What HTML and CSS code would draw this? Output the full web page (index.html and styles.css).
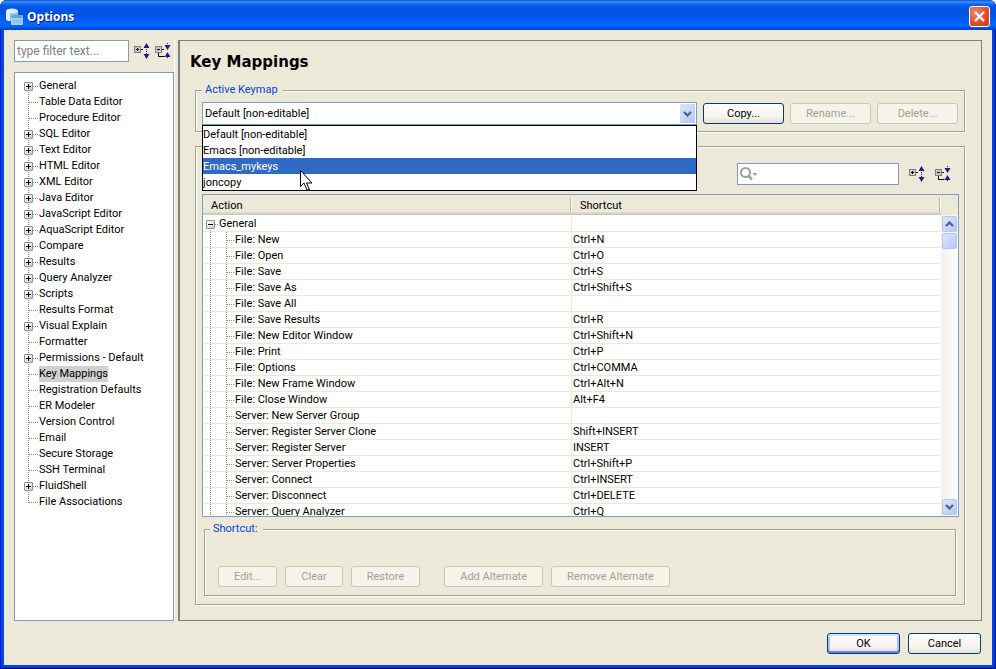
FILE: index.html
```html
<!DOCTYPE html>
<html lang="en">

<head>
  <meta charset="UTF-8">
  <meta name="viewport" content="width=device-width, initial-scale=1.0">
  <title>Options</title>
  <link rel="stylesheet" href="styles.css">
</head>

<body>

  <!-- Shared icons -->
  <svg class="symbols" aria-hidden="true">
    <symbol id="expand-all" viewBox="0 0 16 16">
      <rect x="0.5" y="3.5" width="6" height="6" fill="#c8c8c8" stroke="#808080"/>
      <path d="M2 6.5h3M3.5 5v3M7 6.5h2" stroke="#000" fill="none"/>
      <path d="M12.5 0l3 5h-6zM12.5 16l3-5h-6z" fill="#1c1c8c"/>
      <path d="M12.5 6v5" stroke="#1c1c8c" stroke-dasharray="1 1" fill="none"/>
    </symbol>
    <symbol id="collapse-all" viewBox="0 0 16 16">
      <rect x="0.5" y="3.5" width="6" height="6" fill="#c8c8c8" stroke="#808080"/>
      <path d="M2 6.5h3M7 6.5h2M3.5 10v3.5h6" stroke="#000" fill="none"/>
      <path d="M12.5 7l3-5h-6zM12.5 9l3 5h-6z" fill="#1c1c8c"/>
      <path d="M12.5 0v2M12.5 14v2" stroke="#1c1c8c" stroke-dasharray="1 1" fill="none"/>
    </symbol>
    <symbol id="chevron-down" viewBox="0 0 9 6">
      <path d="M1 1l3.5 3.5L8 1" fill="none" stroke="#4d6185" stroke-width="2.2"/>
    </symbol>
    <symbol id="chevron-up" viewBox="0 0 9 6">
      <path d="M1 5l3.5-3.5L8 5" fill="none" stroke="#4d6185" stroke-width="2.2"/>
    </symbol>
  </svg>

  <div class="window">
    <header class="titlebar">
      <svg class="app-icon" viewBox="0 0 17 17" aria-hidden="true">
        <path d="M0 3v8c0 3 12 3 12 0V3z" fill="#8cc4ea"/>
        <path d="M0 3v8c0 1 2 2 4 2V4z" fill="#e4f1f8"/>
        <ellipse cx="6" cy="3" rx="6" ry="2.4" fill="#d9f0f4"/>
        <rect x="5" y="7" width="12" height="10" rx="1" fill="#a9d2f0"/>
        <rect x="5" y="7" width="12" height="3" rx="1" fill="#5fa8dc"/>
        <path d="M6 12.5h10M6 14.5h10M8.5 10v6M11.5 10v6M14.5 10v6" stroke="#8abfe4" fill="none"/>
      </svg>
      <span class="window-title">Options</span>
      <button type="button" class="close-btn" aria-label="Close">
        <svg viewBox="0 0 11 11"><path d="M1 1l9 9M10 1l-9 9" stroke="#fff" stroke-width="2.2"/></svg>
      </button>
    </header>

    <main class="content">
      <aside class="sidebar">
        <div class="filter-row">
          <input type="text" class="filter" placeholder="type filter text..." aria-label="Filter options">
          <button type="button" class="icon-btn" aria-label="Expand all"><svg><use href="#expand-all"/></svg></button>
          <button type="button" class="icon-btn" aria-label="Collapse all"><svg><use href="#collapse-all"/></svg></button>
        </div>
        <ul class="tree">
          <li><button type="button" class="expander" aria-label="Expand"></button><span>General</span></li>
          <li><span>Table Data Editor</span></li>
          <li><span>Procedure Editor</span></li>
          <li><button type="button" class="expander" aria-label="Expand"></button><span>SQL Editor</span></li>
          <li><button type="button" class="expander" aria-label="Expand"></button><span>Text Editor</span></li>
          <li><button type="button" class="expander" aria-label="Expand"></button><span>HTML Editor</span></li>
          <li><button type="button" class="expander" aria-label="Expand"></button><span>XML Editor</span></li>
          <li><button type="button" class="expander" aria-label="Expand"></button><span>Java Editor</span></li>
          <li><button type="button" class="expander" aria-label="Expand"></button><span>JavaScript Editor</span></li>
          <li><button type="button" class="expander" aria-label="Expand"></button><span>AquaScript Editor</span></li>
          <li><button type="button" class="expander" aria-label="Expand"></button><span>Compare</span></li>
          <li><button type="button" class="expander" aria-label="Expand"></button><span>Results</span></li>
          <li><button type="button" class="expander" aria-label="Expand"></button><span>Query Analyzer</span></li>
          <li><button type="button" class="expander" aria-label="Expand"></button><span>Scripts</span></li>
          <li><span>Results Format</span></li>
          <li><button type="button" class="expander" aria-label="Expand"></button><span>Visual Explain</span></li>
          <li><span>Formatter</span></li>
          <li><button type="button" class="expander" aria-label="Expand"></button><span>Permissions - Default</span></li>
          <li><span class="selected">Key Mappings</span></li>
          <li><span>Registration Defaults</span></li>
          <li><span>ER Modeler</span></li>
          <li><span>Version Control</span></li>
          <li><span>Email</span></li>
          <li><span>Secure Storage</span></li>
          <li><span>SSH Terminal</span></li>
          <li><button type="button" class="expander" aria-label="Expand"></button><span>FluidShell</span></li>
          <li><span>File Associations</span></li>
        </ul>
      </aside>

      <section class="panel">
        <h1>Key Mappings</h1>

        <fieldset class="keymap">
          <legend><label for="keymap">Active Keymap</label></legend>
          <div class="keymap-row">
            <div class="combo">
              <select id="keymap">
                <option>Default [non-editable]</option>
                <option>Emacs [non-editable]</option>
                <option>Emacs_mykeys</option>
                <option>joncopy</option>
              </select>
              <span class="combo-arrow"><svg><use href="#chevron-down"/></svg></span>
              <ul class="combo-list" role="listbox" aria-label="Active Keymap">
                <li role="option">Default [non-editable]</li>
                <li role="option">Emacs [non-editable]</li>
                <li role="option" class="active" aria-selected="true">Emacs_mykeys</li>
                <li role="option">joncopy</li>
              </ul>
              <svg class="pointer" viewBox="0 0 13 21" aria-hidden="true">
                <path d="M0.5 0.5v16l3.500-3.500 3 7h2.500l-3-7h5.500z" fill="#fff" stroke="#000"/>
              </svg>
            </div>
            <button type="button" class="btn wide">Copy...</button>
            <button type="button" class="btn wide" disabled>Rename...</button>
            <button type="button" class="btn wide" disabled>Delete...</button>
          </div>
        </fieldset>

        <section class="actions">
          <div class="search-row">
            <div class="search">
              <svg viewBox="0 0 18 14" aria-hidden="true">
                <circle cx="5.5" cy="5.5" r="4.5" fill="none" stroke="#a0a0a0" stroke-width="2"/>
                <path d="M8.5 9l3.5 3.5" stroke="#a0a0a0" stroke-width="2.5"/>
                <path d="M12.5 6h5l-2.5 3z" fill="#a0a0a0"/>
              </svg>
              <input type="text" aria-label="Search actions">
            </div>
            <button type="button" class="icon-btn" aria-label="Expand all"><svg><use href="#expand-all"/></svg></button>
            <button type="button" class="icon-btn" aria-label="Collapse all"><svg><use href="#collapse-all"/></svg></button>
          </div>

          <div class="grid">
            <div class="grid-view">
              <table>
                <thead>
                  <tr><th>Action</th><th>Shortcut</th></tr>
                </thead>
                <tbody>
                  <tr class="group"><td><button type="button" class="expander open" aria-label="Collapse"></button>General</td><td></td></tr>
                  <tr><td>File: New</td><td>Ctrl+N</td></tr>
                  <tr><td>File: Open</td><td>Ctrl+O</td></tr>
                  <tr><td>File: Save</td><td>Ctrl+S</td></tr>
                  <tr><td>File: Save As</td><td>Ctrl+Shift+S</td></tr>
                  <tr><td>File: Save All</td><td></td></tr>
                  <tr><td>File: Save Results</td><td>Ctrl+R</td></tr>
                  <tr><td>File: New Editor Window</td><td>Ctrl+Shift+N</td></tr>
                  <tr><td>File: Print</td><td>Ctrl+P</td></tr>
                  <tr><td>File: Options</td><td>Ctrl+COMMA</td></tr>
                  <tr><td>File: New Frame Window</td><td>Ctrl+Alt+N</td></tr>
                  <tr><td>File: Close Window</td><td>Alt+F4</td></tr>
                  <tr><td>Server: New Server Group</td><td></td></tr>
                  <tr><td>Server: Register Server Clone</td><td>Shift+INSERT</td></tr>
                  <tr><td>Server: Register Server</td><td>INSERT</td></tr>
                  <tr><td>Server: Server Properties</td><td>Ctrl+Shift+P</td></tr>
                  <tr><td>Server: Connect</td><td>Ctrl+INSERT</td></tr>
                  <tr><td>Server: Disconnect</td><td>Ctrl+DELETE</td></tr>
                  <tr><td>Server: Query Analyzer</td><td>Ctrl+Q</td></tr>
                </tbody>
              </table>
            </div>
            <div class="scrollbar">
              <button type="button" class="scroll-btn" aria-label="Scroll up"><svg><use href="#chevron-up"/></svg></button>
              <div class="thumb"></div>
              <button type="button" class="scroll-btn last" aria-label="Scroll down"><svg><use href="#chevron-down"/></svg></button>
            </div>
          </div>

          <fieldset class="shortcut">
            <legend>Shortcut:</legend>
            <div class="shortcut-row">
              <button type="button" class="btn" disabled>Edit...</button>
              <button type="button" class="btn" disabled>Clear</button>
              <button type="button" class="btn" disabled>Restore</button>
              <button type="button" class="btn split" disabled>Add Alternate</button>
              <button type="button" class="btn" disabled>Remove Alternate</button>
            </div>
          </fieldset>
        </section>
      </section>
    </main>

    <footer class="footer">
      <button type="button" class="btn default">OK</button>
      <button type="button" class="btn cancel">Cancel</button>
    </footer>
  </div>

</body>

</html>
```

FILE: styles.css
```css
* {
  box-sizing: border-box;
}

body {
  margin: 0;
  background: #fff;
  color: #000;
  font-family: Roboto, "Liberation Sans", sans-serif;
  font-size: 11px;
  line-height: 16px;
}

button, input, select {
  font: inherit;
  color: inherit;
  margin: 0;
}

ul {
  list-style: none;
  margin: 0;
  padding: 0;
}

.symbols {
  display: none;
}

/* Window frame */
.window {
  display: flex;
  flex-direction: column;
  height: 100vh;
  padding: 0 4px 4px;
  border-radius: 7px 7px 0 0;
  background: #0046e0;
  box-shadow: inset 1px 0 #0019cf, inset -1px -1px #00138c, inset -2px -2px #0030c8;
  overflow: hidden;
}

.titlebar {
  display: flex;
  align-items: center;
  flex: none;
  height: 30px;
  margin: 0 -4px;
  padding: 3px 6px 0;
  background: linear-gradient(#0850d0 0, #3c90ff 2px, #1268f0 4px, #0055e6 7px, #0054e3 14px, #0062fa 22px, #0066ff 26px, #0050e0 28px, #0040c8 30px);
}

.app-icon {
  width: 17px;
  height: 17px;
}

.window-title {
  flex: 1;
  margin-left: 4px;
  color: #fff;
  font-family: "Open Sans", "Noto Sans", sans-serif;
  font-size: 12px;
  font-weight: bold;
  text-shadow: 1px 1px #0a1883;
}

.close-btn {
  display: flex;
  align-items: center;
  justify-content: center;
  width: 21px;
  height: 21px;
  padding: 0;
  border: 1px solid #fff;
  border-radius: 3px;
  background: radial-gradient(circle at 30% 30%, #f08a6c, #e0502c 55%, #c83c14);
}

.close-btn svg {
  width: 11px;
  height: 11px;
}

.content {
  display: flex;
  flex: 1;
  min-height: 0;
  padding: 10px 10px 0;
  background: #ece9d8;
}

.footer {
  display: flex;
  justify-content: flex-end;
  gap: 8px;
  padding: 12px 11px 11px;
  background: #ece9d8;
}

/* Sidebar */
.sidebar {
  display: flex;
  flex-direction: column;
  flex: none;
  gap: 10px;
  width: 161px;
  margin-right: 3px;
  border-right: 1px solid #fff;
}

.filter-row {
  display: flex;
  align-items: center;
  gap: 5px;
  padding-right: 3px;
}

.filter {
  flex: 1;
  min-width: 0;
  height: 22px;
  padding: 0 2px;
  border: 1px solid #7f9db9;
  background: #fff;
  font-size: 12px;
}

.filter::placeholder {
  color: #808080;
}

.icon-btn {
  width: 16px;
  height: 16px;
  padding: 0;
  border: none;
  background: none;
}

.icon-btn svg {
  display: block;
  width: 16px;
  height: 16px;
}

.tree {
  flex: 1;
  min-height: 0;
  padding-top: 5px;
  border: 1px solid #7f9db9;
  background: #fff;
  overflow: hidden;
}

.tree li {
  display: flex;
  align-items: center;
  height: 16px;
  padding-left: 24px;
  background-image:
    repeating-linear-gradient(#909090 0 1px, transparent 1px 2px),
    repeating-linear-gradient(to right, #909090 0 1px, transparent 1px 2px);
  background-repeat: no-repeat;
  background-position: 13px 0, 14px 8px;
  background-size: 1px 100%, 10px 1px;
}

.tree li:first-child {
  background-position: 13px 8px, 14px 8px;
}

.tree li:last-child {
  background-size: 1px 9px, 10px 1px;
}

.tree span {
  white-space: nowrap;
}

.tree .selected {
  background: #d0d0d0;
}

.expander {
  flex: none;
  width: 9px;
  height: 9px;
  margin: 1px 6px 0 -15px;
  padding: 0;
  border: 1px solid #7b93b0;
  border-radius: 1px;
  background:
    linear-gradient(#000, #000) center / 5px 1px no-repeat,
    linear-gradient(#000, #000) center / 1px 5px no-repeat,
    linear-gradient(135deg, #fff, #d0ccc0);
}

.expander.open {
  background:
    linear-gradient(#000, #000) center / 5px 1px no-repeat,
    linear-gradient(135deg, #fff, #d0ccc0);
}

/* Key mappings panel */
.panel {
  display: flex;
  flex-direction: column;
  flex: 1;
  min-width: 0;
  padding: 11px 16px 15px 15px;
  border: 1px solid #808080;
  border-left-width: 2px;
}

h1 {
  margin: 0 0 11px -5px;
  font-family: "DejaVu Sans", sans-serif;
  font-size: 15px;
  line-height: 20px;
}

fieldset, .actions {
  min-width: 0;
  margin: 0;
  border: 1px solid #a0a093;
  box-shadow: 1px 1px #fff, inset 1px 1px #fff;
}

legend {
  padding: 0 5px 0 3px;
  background: #ece9d8;
  color: #0046d5;
  line-height: 14px;
}

.keymap {
  padding: 5px 6px 6px;
}

.keymap-row {
  display: flex;
  align-items: center;
  gap: 6px;
}

.combo {
  position: relative;
  flex: 1;
}

.combo select {
  display: block;
  width: 100%;
  height: 23px;
  padding: 0 20px 0 2px;
  border: 1px solid #7f9db9;
  border-radius: 0;
  background: #fff;
  appearance: none;
}

.combo-arrow {
  position: absolute;
  top: 2px;
  right: 2px;
  display: flex;
  align-items: center;
  justify-content: center;
  width: 15px;
  height: 19px;
  background: linear-gradient(135deg, #dce6fe, #b4c8f6);
  pointer-events: none;
}

.combo-arrow svg, .scroll-btn svg {
  width: 9px;
  height: 6px;
}

.combo-list {
  position: absolute;
  top: 100%;
  left: 0;
  right: 0;
  z-index: 1;
  border: 1px solid #000;
  background: #fff;
}

.combo-list li {
  height: 16px;
  line-height: 18px;
}

.combo-list li.active {
  background: #316ac5;
  color: #fff;
}

.pointer {
  position: absolute;
  top: 68px;
  left: 98px;
  z-index: 2;
  width: 13px;
  height: 21px;
}

.btn {
  height: 21px;
  padding: 0 15px;
  border: 1px solid #003c74;
  border-radius: 3px;
  background: linear-gradient(#fff, #f4f3ee 70%, #e2dfd4);
  line-height: 19px;
  white-space: nowrap;
}

.btn:disabled {
  border-color: #c9c7ba;
  background: #f5f4ea;
  color: #a1a192;
}

.btn.wide {
  width: 81px;
}

.btn.default, .btn.cancel {
  width: 73px;
}

.btn.default {
  box-shadow: inset 0 2px #cee3ff, inset 0 -2px #6982ee, inset 2px 0 #a9c4f4, inset -2px 0 #a9c4f4;
}

/* Action list */
.actions {
  display: flex;
  flex-direction: column;
  flex: 1;
  min-height: 0;
  margin-top: 14px;
  padding: 16px 5px 8px 6px;
}

.search-row {
  display: flex;
  align-items: center;
  justify-content: flex-end;
  gap: 10px;
  margin-bottom: 9px;
  padding-right: 8px;
}

.search {
  display: flex;
  align-items: center;
  width: 162px;
  height: 22px;
  padding-left: 2px;
  border: 1px solid #7f9db9;
  background: #fff;
}

.search svg {
  flex: none;
  width: 18px;
  height: 14px;
}

.search input {
  flex: 1;
  min-width: 0;
  padding: 0 2px;
  border: none;
  background: none;
  outline: none;
}

.grid {
  display: flex;
  flex: 1;
  min-height: 0;
  border: 1px solid #7f9db9;
}

.grid-view {
  flex: 1;
  min-width: 0;
  background: #fff;
  overflow: hidden;
}

table {
  width: 100%;
  table-layout: fixed;
  border-collapse: separate;
  border-spacing: 0;
}

th {
  height: 21px;
  padding: 0 8px;
  background:
    linear-gradient(#fff, #fff) right 0 top 3px / 1px 14px no-repeat,
    linear-gradient(#b8b5a4, #b8b5a4) right 1px top 3px / 1px 14px no-repeat,
    linear-gradient(#ece9d8 17px, #e2decd 17px 18px, #d6d2c2 18px 19px, #cbc7b8 19px 20px, #fff 20px);
  font-weight: normal;
  text-align: left;
}

td {
  height: 16px;
  padding: 0 0 0 1px;
  border-bottom: 1px solid #ece9d8;
  line-height: 15px;
}

td:first-child {
  padding-left: 32px;
  border-right: 1px solid #ece9d8;
  background-image:
    repeating-linear-gradient(#909090 0 1px, transparent 1px 2px),
    repeating-linear-gradient(#909090 0 1px, transparent 1px 2px),
    repeating-linear-gradient(to right, #909090 0 1px, transparent 1px 2px);
  background-repeat: no-repeat;
  background-origin: border-box;
  background-clip: border-box;
  background-position: 7px 0, 23px 0, 24px 8px;
  background-size: 1px 100%, 1px 100%, 8px 1px;
}

.group td:first-child {
  padding-left: 16px;
  background-position: 7px 12px, 0 0, 12px 8px;
  background-size: 1px 4px, 0 0, 4px 1px;
}

.group .expander {
  margin: 0 4px 0 -13px;
  vertical-align: -1px;
}

.scrollbar {
  display: flex;
  flex-direction: column;
  flex: none;
  width: 17px;
  margin-top: 20px;
  padding: 1px;
  background: linear-gradient(to right, #f3f1ec, #fefefb);
}

.scroll-btn, .thumb {
  display: flex;
  align-items: center;
  justify-content: center;
  flex: none;
  height: 16px;
  padding: 0;
  border: 1px solid #b4c6ee;
  border-radius: 2px;
  background: linear-gradient(135deg, #dce6fe, #b4c8f6);
}

.thumb {
  margin-top: 1px;
}

.scroll-btn.last {
  margin-top: auto;
}

.shortcut {
  margin: 5px 3px 0 2px;
  padding: 30px 13px 8px;
}

.shortcut legend {
  margin-left: -8px;
}

.shortcut-row {
  display: flex;
  gap: 8px;
}

.shortcut-row .split {
  margin-left: 16px;
}
```
